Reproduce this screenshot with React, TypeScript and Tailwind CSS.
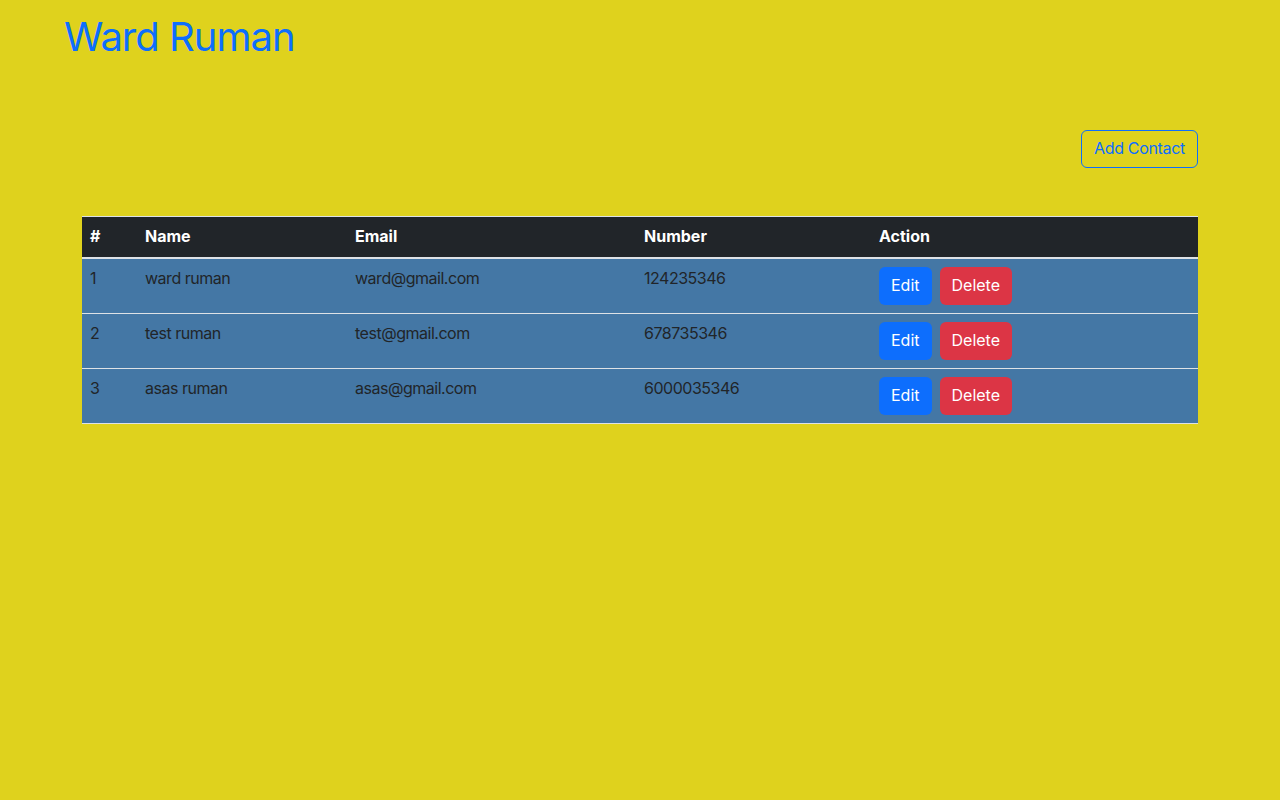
const contacts = [
  { id: 1, name: "ward ruman", email: "ward@gmail.com", number: "124235346" },
  { id: 2, name: "test ruman", email: "test@gmail.com", number: "678735346" },
  { id: 3, name: "asas ruman", email: "asas@gmail.com", number: "6000035346" },
];

export default function App() {
  return (
    <div
      className="min-h-[800px] bg-[#dfd21d] text-[#212529]"
      style={{ fontFamily: "Inter, 'Noto Sans', sans-serif" }}
    >
      <h1 className="pl-[64px] pt-[13px] text-[40px] leading-[48px] font-normal tracking-[-0.025em] text-[#0d6efd]">
        Ward Ruman
      </h1>

      <div className="px-[82px]">
        <div className="mt-[69px] flex justify-end">
          <button className="h-[38px] rounded-[6px] border border-[#0d6efd] px-[12px] pb-[2px] text-[16px] tracking-[-0.02em] text-[#0d6efd]">
            Add Contact
          </button>
        </div>

        <table className="mt-[48px] w-full border-collapse text-left text-[16px]">
          <thead>
            <tr className="border-t border-[#dee2e6] bg-[#212529] text-white">
              <th className="w-[55px] h-[41px] px-[8px] pb-[2px] font-bold">#</th>
              <th className="w-[210px] px-[8px] pb-[2px] font-bold">Name</th>
              <th className="w-[289px] px-[8px] pb-[2px] font-bold">Email</th>
              <th className="w-[235px] px-[8px] pb-[2px] font-bold">Number</th>
              <th className="px-[8px] pb-[2px] font-bold">Action</th>
            </tr>
          </thead>
          <tbody>
            {contacts.map((c, i) => (
              <tr
                key={c.id}
                className={
                  i === 0
                    ? "border-t-2 border-b border-[#dee2e6] bg-[#4477a5]"
                    : "border-b border-[#dee2e6] bg-[#4477a5]"
                }
              >
                <td className="px-[8px] pt-[7px] align-top leading-[24px] tracking-[-0.03em]">{c.id}</td>
                <td className="px-[8px] pt-[7px] align-top leading-[24px] tracking-[-0.03em]">{c.name}</td>
                <td className="px-[8px] pt-[7px] align-top leading-[24px] tracking-[-0.03em]">{c.email}</td>
                <td className="px-[8px] pt-[7px] align-top leading-[24px] tracking-[-0.03em]">{c.number}</td>
                <td className="px-[8px] py-[8px] align-top">
                  <div className="flex gap-[8px]">
                    <button className="h-[38px] rounded-[6px] bg-[#0d6efd] px-[12px] pb-[2px] text-white">
                      Edit
                    </button>
                    <button className="h-[38px] rounded-[6px] bg-[#dc3545] px-[12px] pb-[2px] text-white">
                      Delete
                    </button>
                  </div>
                </td>
              </tr>
            ))}
          </tbody>
        </table>
      </div>
    </div>
  );
}
